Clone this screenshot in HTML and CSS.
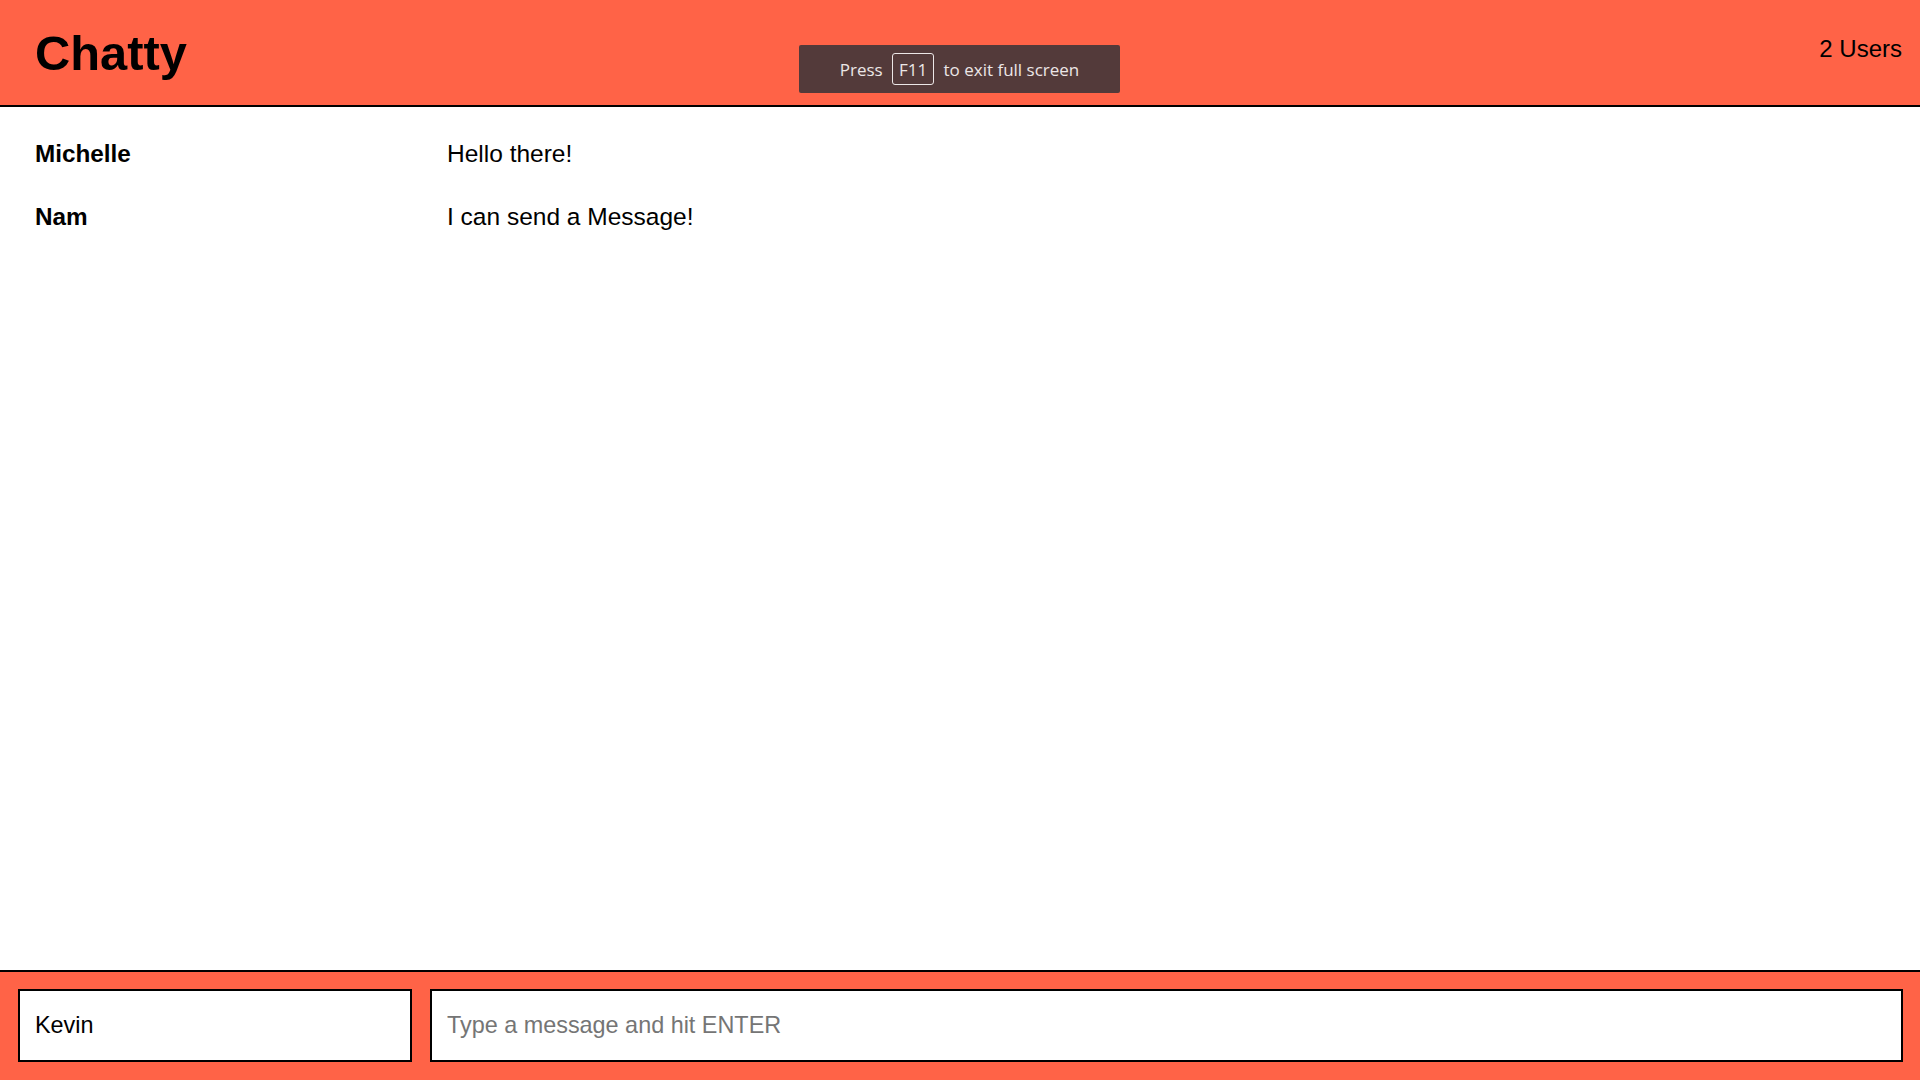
FILE: index.html
```html
<!DOCTYPE html>
<html lang="en">
<head>
<meta charset="utf-8">
<title>Chatty</title>
<link rel="stylesheet" href="styles.css">
</head>
<body>
<div class="app">
  <nav class="navbar">
    <a class="brand">Chatty</a>
    <span class="user-count">2 Users</span>
  </nav>
  <main class="messages">
    <div class="message">
      <span class="message-username">Michelle</span>
      <span class="message-content">Hello there!</span>
    </div>
    <div class="message">
      <span class="message-username">Nam</span>
      <span class="message-content">I can send a Message!</span>
    </div>
  </main>
  <footer class="chatbar">
    <input class="chatbar-username" value="Kevin">
    <input class="chatbar-message" placeholder="Type a message and hit ENTER">
  </footer>
  <div class="fs-toast">Press <span class="key">F11</span> to exit full screen</div>
</div>
</body>
</html>
```
FILE: styles.css
```css
html, body {
  margin: 0;
  padding: 0;
  height: 100%;
}
body {
  font-family: "Liberation Sans", Arial, sans-serif;
  color: #000;
  background: #fff;
}
.app {
  height: 100vh;
  display: flex;
  flex-direction: column;
}
.navbar {
  height: 105px;
  flex: 0 0 auto;
  background: #ff6347;
  border-bottom: 2px solid #000;
  display: flex;
  justify-content: space-between;
  align-items: flex-start;
  padding: 0 18px 0 35px;
}
.brand {
  font-size: 48.8px;
  font-weight: bold;
  margin-top: 25px;
  line-height: normal;
}
.user-count {
  font-size: 24px;
  margin-top: 35px;
  line-height: normal;
}
.messages {
  flex: 1 1 auto;
  padding: 15px 0 0 35px;
  overflow: hidden;
}
.message {
  display: flex;
  font-size: 24.3px;
  line-height: 63px;
}
.message-username {
  width: 412px;
  flex: 0 0 412px;
  font-weight: bold;
}
.message-content {
  flex: 1;
  font-size: 24.5px;
}
.chatbar {
  flex: 0 0 auto;
  height: 73px;
  background: #ff6347;
  border-top: 2px solid #000;
  padding: 17px 17px 18px 18px;
  display: flex;
  gap: 18px;
}
.chatbar input {
  box-sizing: border-box;
  height: 73px;
  border: 2px solid #000;
  border-radius: 0;
  background: #fff;
  font-family: "Liberation Sans", Arial, sans-serif;
  font-size: 23.4px;
  color: #000;
  padding: 0 15px;
  margin: 0;
  outline: none;
}
.chatbar input::placeholder {
  color: #757575;
}
.chatbar-username {
  width: 394px;
  flex: 0 0 394px;
}
.chatbar-message {
  flex: 1 1 auto;
  min-width: 0;
}
.fs-toast {
  position: absolute;
  top: 45px;
  left: 799px;
  width: 321px;
  height: 48px;
  box-sizing: border-box;
  background: #533a3a;
  border-radius: 2px;
  color: #ece6e6;
  font-family: "Open Sans", "DejaVu Sans", sans-serif;
  font-size: 17px;
  display: flex;
  align-items: center;
  justify-content: center;
  gap: 5px;
  white-space: pre;
}
.key {
  display: inline-flex;
  align-items: center;
  justify-content: center;
  width: 42px;
  height: 32px;
  box-sizing: border-box;
  border: 1px solid #ece6e6;
  border-radius: 3px;
}
```
